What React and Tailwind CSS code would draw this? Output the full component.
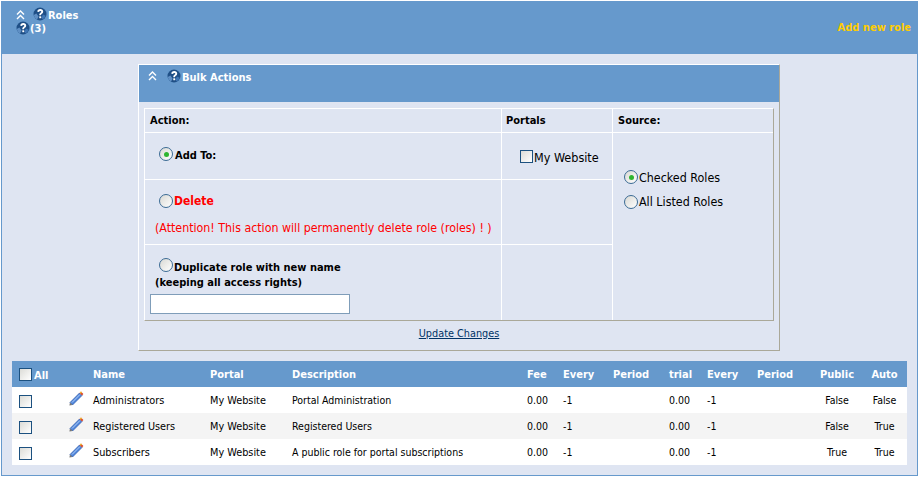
import React from 'react';

const helpIcon = (
  <svg width="14" height="14" viewBox="0 0 14 14" className="shrink-0">
    <circle cx="7" cy="7" r="6.5" fill="#1f4f86" />
    <path d="M.8 8a6.4 6.4 0 0 0 3.2 4.8l1.6-3.4-2.2-3z" fill="#5f8fc4" />
    <path d="M9.5 12.6a6.4 6.4 0 0 0 3.2-3.8l-2.8-1.2-1.4 3z" fill="#3f76b5" />
    <path d="M4.3 4.8C4.3 3 5.5 2 7.2 2c1.8 0 3 1 3 2.4 0 1.2-.7 1.8-1.4 2.3-.6.4-.8.8-.8 1.5H6.3c0-1.2.3-1.8 1.1-2.4.6-.4.9-.7.9-1.1 0-.5-.4-.8-1-.8-.7 0-1.1.4-1.1 1z" fill="#fff" />
    <rect x="6.3" y="9.3" width="1.9" height="1.9" fill="#fff" />
  </svg>
);

const collapseIcon = (
  <svg width="9" height="10" viewBox="0 0 9 10" className="shrink-0" fill="none" stroke="#fff" strokeWidth="1.4">
    <path d="M1 4.5 4.5 1 8 4.5" />
    <path d="M1 9 4.5 5.5 8 9" />
  </svg>
);

const pencilIcon = (
  <svg width="15" height="15" viewBox="0 0 15 15" className="shrink-0">
    <path d="M1 11.5 10.5 2l2.5 2.5L3.5 14z" fill="#4f86dc" stroke="#2c57a8" strokeWidth="0.7" />
    <path d="M3 11.5 11 3.5" stroke="#b5d0f5" strokeWidth="1" />
    <path d="M10.5 2 12 .6l2.4 2.4L13 4.5z" fill="#d9472b" />
    <path d="M12 .6l1 1-1.2 1.2-1-1z" fill="#f2c230" />
    <path d="M1 11.5 0.4 14.6 3.5 14z" fill="#777" />
  </svg>
);

function Radio({ checked }) {
  return (
    <span className="inline-flex w-[14px] h-[14px] shrink-0 items-center justify-center rounded-full border border-[#3b6b94] bg-linear-to-br from-[#d9d9d4] to-white">
      {checked && <span className="w-[5px] h-[5px] rounded-full bg-[#2fb52f]" />}
    </span>
  );
}

function Checkbox() {
  return <span className="block w-[13px] h-[13px] shrink-0 border border-[#1c5180] bg-linear-to-br from-[#dcdcd7] to-white" />;
}

const roles = [
  { name: 'Administrators', description: 'Portal Administration', isPublic: 'False', auto: 'False' },
  { name: 'Registered Users', description: 'Registered Users', isPublic: 'False', auto: 'True' },
  { name: 'Subscribers', description: 'A public role for portal subscriptions', isPublic: 'True', auto: 'True' },
];

const gridCols = 'grid grid-cols-[57px_24px_117px_82px_235px_36px_50px_56px_38px_50px_55px_50px_45px] items-center';

export default function App() {
  return (
    <div className="w-[919px] h-[477px] bg-white pt-px pl-px font-['DejaVu_Sans_Condensed','DejaVu_Sans',sans-serif] text-[11px] leading-[14px] text-black">
      <div className="w-[917px] h-[475px] border border-[#6699cc] bg-[#dfe5f2]">
        {/* En-tete */}
        <div className="h-[52px] bg-[#6699cc] flex justify-between pl-[14px] pr-[6px] pt-[5px] text-white font-bold">
          <div>
            <div className="flex items-start h-[14px]">
              <span className="mt-[3px]">{collapseIcon}</span>
              <span className="ml-[8px]">{helpIcon}</span>
              <span className="ml-px mt-[2px]">Roles</span>
            </div>
            <div className="flex items-start h-[14px]">
              {helpIcon}
              <span className="mt-px">(3)</span>
            </div>
          </div>
          <a className="text-[#ffcc00] mt-[14px]">Add new role</a>
        </div>

        {/* Bulk actions */}
        <div className="w-[642px] h-[287px] ml-[136px] mt-[10px] border-t border-l border-white border-r border-b border-r-[#aaa899] border-b-[#aaa899] flex flex-col">
          <div className="h-[37px] bg-[#6699cc] flex items-start pl-[9px] pt-[4px] text-white font-bold">
            <span className="mt-[2px]">{collapseIcon}</span>
            <span className="ml-[10px]">{helpIcon}</span>
            <span className="ml-px mt-[2px]">Bulk Actions</span>
          </div>
          <div className="mx-[5px] mt-[6px] w-[630px] h-[213px] border-t border-l border-white border-r border-b border-r-[#aaa899] border-b-[#aaa899] grid grid-cols-[357px_111px_160px] grid-rows-[24px_47px_65px_75px]">
            <div className="border-r border-b border-white font-bold pl-[5px] flex items-center">Action:</div>
            <div className="border-r border-b border-white font-bold pl-[4px] flex items-center">Portals</div>
            <div className="border-b border-white font-bold pl-[5px] flex items-center">Source:</div>

            <div className="border-r border-b border-white pl-[14px] pt-[14px] font-bold flex items-start gap-[2px]">
              <Radio checked />
              <span className="mt-[2px]">Add To:</span>
            </div>
            <div className="border-r border-b border-white pl-[18px] pt-[17px] flex items-start gap-[1px] text-[12.5px]">
              <Checkbox />
              <span className="mt-px">My Website</span>
            </div>
            <div className="row-span-3 flex flex-col items-start pl-[11px] pt-[36px] gap-[9px] text-[12.4px]">
              <div className="flex items-center gap-[1px]">
                <Radio checked />
                <span className="mt-[2px]">Checked Roles</span>
              </div>
              <div className="flex items-center gap-[1px]">
                <Radio />
                <span className="mt-px">All Listed Roles</span>
              </div>
            </div>

            <div className="border-r border-b border-white pl-[14px] pt-[14px] text-[#ff0000]">
              <div className="flex items-center gap-[1px] font-bold text-[12px]">
                <Radio />
                <span>Delete</span>
              </div>
              <div className="mt-[13px] -ml-[4px] text-[12.3px]">(Attention! This action will permanently delete role (roles) ! )</div>
            </div>
            <div className="border-r border-b border-white" />

            <div className="border-r border-white pl-[5px] pt-[13px] font-bold">
              <div className="flex items-start gap-[1px] pl-[9px]">
                <Radio />
                <span className="mt-[3px]">Duplicate role with new name</span>
              </div>
              <div className="pl-[5px] mt-px">(keeping all access rights)</div>
              <input type="text" className="block w-[200px] h-[20px] mt-[4px] border border-[#7f9db9] bg-white" />
            </div>
            <div className="border-r border-white" />
          </div>
          <div className="w-[630px] ml-[5px] mt-[6px] text-center">
            <a className="underline text-[#003366] text-[10.8px]">Update Changes</a>
          </div>
        </div>

        {/* Liste des roles */}
        <div className="w-[895px] ml-[10px] mt-[10px]">
          <div className={`${gridCols} h-[26px] bg-[#6699cc] text-white font-bold pt-[1px]`}>
            <div className="flex items-center pl-[7px] gap-[2px]">
              <Checkbox />
              <span className="mt-[2px]">All</span>
            </div>
            <div />
            <div>Name</div>
            <div>Portal</div>
            <div>Description</div>
            <div>Fee</div>
            <div>Every</div>
            <div>Period</div>
            <div>trial</div>
            <div>Every</div>
            <div>Period</div>
            <div className="text-center">Public</div>
            <div className="text-center">Auto</div>
          </div>
          {roles.map((role, i) => (
            <div key={role.name} className={`${gridCols} h-[26px] text-[10.5px] ${i === 1 ? 'bg-[#f4f4f4]' : 'bg-white'}`}>
              <div className="pl-[7px] mt-[2px]"><Checkbox /></div>
              <div className="mb-[3px]">{pencilIcon}</div>
              <div className="text-[10.8px] mt-[2px]">{role.name}</div>
              <div className="text-[10.8px] mt-[2px]">My Website</div>
              <div>{role.description}</div>
              <div>0.00</div>
              <div>-1</div>
              <div />
              <div>0.00</div>
              <div>-1</div>
              <div />
              <div className="text-center">{role.isPublic}</div>
              <div className="text-center">{role.auto}</div>
            </div>
          ))}
        </div>
      </div>
    </div>
  );
}
